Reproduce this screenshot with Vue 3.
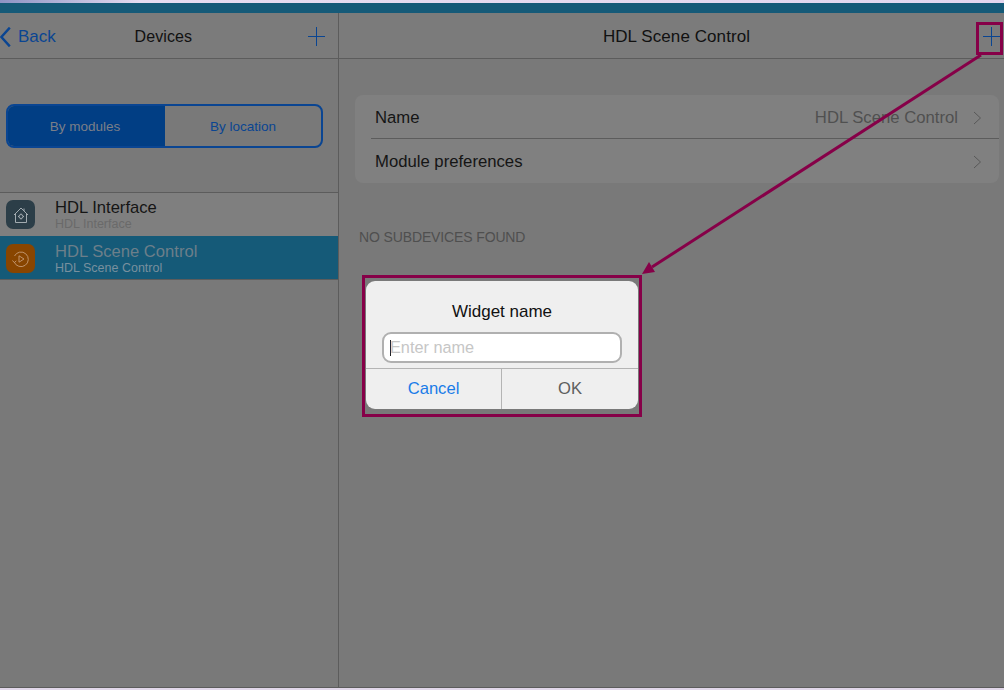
<script setup>
const rows = [
  { title: 'HDL Interface', sub: 'HDL Interface', kind: 'home' },
  { title: 'HDL Scene Control', sub: 'HDL Scene Control', kind: 'scene' }
]
</script>

<template>
  <div class="page">
    <div class="strip"></div>
    <div class="teal"></div>
    <div class="panes">
      <aside class="left">
        <header class="bar">
          <div class="back">
            <svg width="12" height="20" viewBox="0 0 12 20"><path d="M9.8 .6 1.4 10l8.4 9.4" fill="none" stroke="#0a4592" stroke-width="2.4"/></svg>
            <span>Back</span>
          </div>
          <div class="bar-title">Devices</div>
          <svg class="plus" width="17" height="19" viewBox="0 0 17 19"><path d="M0 9.5h17M8.5 0v19" stroke="#0a4592" stroke-width="1"/></svg>
        </header>
        <div class="seg-wrap">
          <div class="seg">
            <div class="seg-item on">By modules</div>
            <div class="seg-item">By location</div>
          </div>
        </div>
        <ul class="list">
          <li v-for="r in rows" :key="r.title" class="row" :class="{ sel: r.kind === 'scene' }">
            <div class="ico" :class="r.kind">
              <svg v-if="r.kind === 'home'" width="16" height="18" viewBox="0 0 16 18" fill="none" stroke="#a2abb0" stroke-width="1">
                <path d="M1 9 8 2l7 7M2.5 8v8.5h11V8M11 2.5v2.5"/>
                <circle cx="8" cy="10.5" r="2"/>
                <path d="M8 7.5v1M8 12.5v1M5 10.5h1M10 10.5h1"/>
              </svg>
              <svg v-else width="18" height="18" viewBox="0 0 18 18" fill="none" stroke="#c0946c" stroke-width="1">
                <path d="M2.2 12A7.3 7.3 0 1 0 2.5 6"/>
                <path d="M.5 10.5 2.3 12.6l2-1.7"/>
                <path d="M7 5.8v6.4L12 9z"/>
              </svg>
            </div>
            <div class="row-text">
              <div class="row-title">{{ r.title }}</div>
              <div class="row-sub">{{ r.sub }}</div>
            </div>
          </li>
        </ul>
      </aside>
      <main class="right">
        <header class="bar center">
          <div class="bar-title big">HDL Scene Control</div>
          <svg class="plus plus-r" width="17" height="19" viewBox="0 0 17 19"><path d="M0 9.5h17M8.5 0v19" stroke="#0a4592" stroke-width="1"/></svg>
        </header>
        <div class="content">
          <section class="card">
            <div class="card-row line">
              <span>Name</span>
              <span class="val">HDL Scene Control</span>
              <svg class="chev" width="9" height="14" viewBox="0 0 9 14"><path d="M1 1l6.5 6L1 13" fill="none" stroke="#585858" stroke-width="1"/></svg>
            </div>
            <div class="card-row">
              <span>Module preferences</span>
              <span class="val"></span>
              <svg class="chev" width="9" height="14" viewBox="0 0 9 14"><path d="M1 1l6.5 6L1 13" fill="none" stroke="#585858" stroke-width="1"/></svg>
            </div>
          </section>
          <div class="empty">NO SUBDEVICES FOUND</div>
        </div>
      </main>
    </div>
    <div class="foot"></div>

    <div class="dialog">
      <div class="d-title">Widget name</div>
      <div class="d-input"><i class="caret"></i><span>Enter name</span></div>
      <div class="d-btns">
        <div class="d-btn cancel">Cancel</div>
        <div class="d-btn ok">OK</div>
      </div>
    </div>

    <div class="mark mark-dialog"></div>
    <div class="mark mark-plus"></div>
    <svg class="arrow" width="1004" height="690" viewBox="0 0 1004 690">
      <path d="M981 55 652 267" stroke="#860048" stroke-width="3" fill="none"/>
      <path d="M642 274 655 272 649 262z" fill="#860048"/>
    </svg>
  </div>
</template>

<style>
html, body { margin: 0; background: #787878; }
</style>

<style scoped>
.page {
  position: relative;
  width: 1004px;
  height: 690px;
  overflow: hidden;
  display: flex;
  flex-direction: column;
  background: #797979;
  font-family: "Liberation Sans", Arial, sans-serif;
  color: #111;
}
.strip { height: 3px; background: linear-gradient(90deg, #8d93c4 0, #e6dcf0 14%, #e3d6ee 100%); }
.teal { height: 10px; background: #155a78; }
.panes { flex: 1; display: flex; min-height: 0; }
.left { width: 338px; border-right: 1px solid #5c5c5c; display: flex; flex-direction: column; }
.right { flex: 1; display: flex; flex-direction: column; min-width: 0; }
.bar {
  position: relative;
  height: 46px;
  padding-top: 2px;
  box-sizing: border-box;
  border-bottom: 1px solid #5c5c5c;
  background: #7b7b7b;
  display: flex;
  align-items: center;
  justify-content: space-between;
  flex: none;
}
.bar-title { font-size: 16px; letter-spacing: .1px; color: #111; }
.bar-title.big { font-size: 17px; letter-spacing: .08px; }
.left .bar-title { margin-left: -37px; }
.center { justify-content: center; padding-left: 10px; }
.back { display: flex; align-items: center; gap: 6px; font-size: 17px; color: #0a4592; }
.plus { margin-right: 13px; }
.plus-r { position: absolute; right: 4px; top: 14px; margin: 0; }
.seg-wrap { height: 133px; padding: 45px 15px 0 6px; box-sizing: border-box; flex: none; }
.seg {
  display: flex;
  height: 44px;
  box-sizing: border-box;
  border: 2px solid #0a4592;
  border-radius: 8px;
  overflow: hidden;
  font-size: 13.5px;
  color: #0a4592;
}
.seg-item { display: flex; align-items: center; justify-content: center; }
.seg-item:first-child { width: 157px; padding-right: 3px; box-sizing: border-box; }
.seg-item:last-child { flex: 1; }
.seg-item.on { background: #013e84; color: #7b7f88; }
.list { list-style: none; margin: 0; padding: 0; border-top: 1px solid #5c5c5c; }
.row { height: 43px; display: flex; align-items: center; background: #7f7f7f; }
.row.sel { height: 44px; background: #155a78; border-bottom: 1px solid #5c5c5c; box-sizing: border-box; }
.ico {
  width: 29px;
  height: 29px;
  margin: 0 20px 0 6px;
  border-radius: 7px;
  display: flex;
  align-items: center;
  justify-content: center;
  flex: none;
}
.ico.home { background: #2c3e48; }
.ico.scene { background: #884500; margin-top: 1px; margin-bottom: -1px; }
.row-text { display: flex; flex-direction: column; padding-top: 1px; }
.sel .row-text { padding-top: 3px; }
.row-title { font-size: 16.6px; line-height: 17px; color: #151515; }
.row-sub { font-size: 12.5px; line-height: 14px; margin-top: 1px; color: #6a6a6a; }
.sel .row-title { color: #6c7f8a; }
.sel .row-sub { color: #78909e; }
.content { flex: 1; padding: 36px 5px 0 16px; background: #797979; }
.card { background: #808080; border-radius: 8px; height: 88px; }
.card-row {
  height: 44px;
  position: relative;
  display: flex;
  align-items: center;
  padding: 2px 17px 0 20px;
  font-size: 16.7px;
  color: #151515;
  box-sizing: border-box;
}
.card-row.line::after {
  content: "";
  position: absolute;
  left: 16px;
  right: 0;
  bottom: 0;
  height: 1px;
  background: #5c5c5c;
}
.val { margin-left: auto; margin-right: 15px; color: #505050; }
.chev { flex: none; }
.empty { margin: 46px 0 0 4px; font-size: 14px; letter-spacing: -.13px; color: #4f4f4f; }
.foot { height: 3px; background: #e2d8ea; border-top: 1px solid #5c5c5c; box-sizing: border-box; flex: none; }

.dialog {
  position: absolute;
  left: 366px;
  top: 281px;
  width: 272px;
  height: 128px;
  border-radius: 9px;
  background: #efefef;
  display: flex;
  flex-direction: column;
  overflow: hidden;
}
.d-title { text-align: center; font-size: 17px; line-height: 18px; margin-top: 22px; color: #111; }
.d-input {
  margin: 11px 16px 0;
  height: 31px;
  box-sizing: border-box;
  border: 2px solid #b0b0b0;
  border-radius: 9px;
  background: #fff;
  display: flex;
  align-items: center;
  padding-left: 6px;
  font-size: 16.3px;
  color: #c6c6c6;
}
.caret { width: 1px; height: 16px; background: #222; margin-right: -1px; }
.d-btns { margin-top: 5px; flex: 1; display: flex; border-top: 1px solid #b4b4b4; }
.d-btn { display: flex; align-items: center; justify-content: center; font-size: 16.6px; }
.cancel { width: 135px; color: #1a7ce8; border-right: 1px solid #b4b4b4; }
.ok { flex: 1; color: #5e5e5e; }

.mark { position: absolute; box-sizing: border-box; border: 3px solid #860048; }
.mark-dialog { left: 362px; top: 275px; width: 280px; height: 142px; }
.mark-plus { left: 976px; top: 22px; width: 27px; height: 33px; }
.arrow { position: absolute; left: 0; top: 0; pointer-events: none; }
</style>
